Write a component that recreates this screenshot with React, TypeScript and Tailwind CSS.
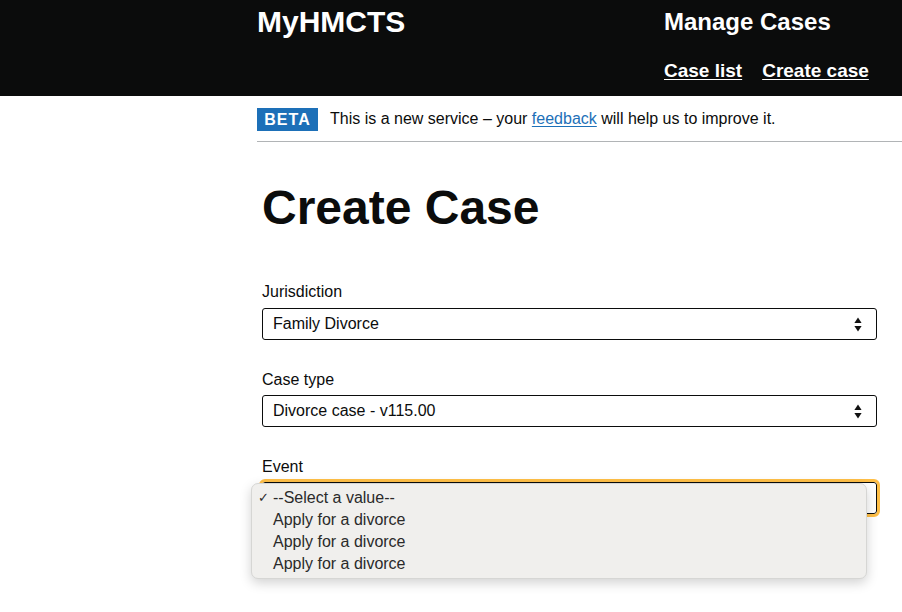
import React from "react";

const Arrows = () => (
  <svg width="8" height="15" viewBox="0 0 8 15" className="shrink-0">
    <path d="M4 0.5 L7.6 6 L0.4 6 Z" fill="#111" />
    <path d="M4 14.5 L7.6 9 L0.4 9 Z" fill="#111" />
  </svg>
);

const FakeSelect = ({ value, focused }: { value: string; focused?: boolean }) => (
  <div
    className={
      "flex h-[32px] w-[615px] items-center justify-between rounded-[3px] border border-[#0b0c0c] bg-white pl-[10px] pr-[14px] text-[16px] text-[#0b0c0c] " +
      (focused ? "outline outline-[3px] outline-[#ffbf47]" : "")
    }
  >
    <span>{value}</span>
    <Arrows />
  </div>
);

export default function App() {
  return (
    <div className="min-h-[612px] bg-white" style={{ fontFamily: '"Liberation Sans", Arial, sans-serif' }}>
      <header className="flex h-[96px] bg-[#0b0c0c] pl-[257px] text-white">
        <div className="w-[407px] pt-[5px] text-[30px] font-bold leading-[34px]">MyHMCTS</div>
        <div className="flex flex-col pt-[8px]">
          <div className="text-[24px] font-bold leading-[28px]">Manage Cases</div>
          <nav className="mt-[23px] flex gap-[20px] text-[19px] font-bold leading-[24px]">
            <a className="underline underline-offset-[2px]">Case list</a>
            <a className="underline underline-offset-[2px]">Create case</a>
          </nav>
        </div>
      </header>

      <div className="ml-[257px] flex items-center gap-[12px] border-b border-[#b1b4b6] pt-[11px] pb-[10px] text-[16px] text-[#0b0c0c]">
        <span className="flex h-[23px] w-[61px] items-center justify-center bg-[#1d70b8] pt-[1px] text-[16px] font-bold tracking-[1px] text-white">
          BETA
        </span>
        <span>
          This is a new service – your{" "}
          <a className="text-[#1d70b8] underline underline-offset-[2px]">feedback</a> will help us to improve it.
        </span>
      </div>

      <main className="pl-[262px] text-[#0b0c0c]">
        <h1 className="mt-[41px] text-[48px] font-bold leading-[50px]">Create Case</h1>

        <div className="mt-[49px] flex flex-col">
          <label className="mb-[6px] text-[16px] leading-[20px]">Jurisdiction</label>
          <FakeSelect value="Family Divorce" />

          <label className="mt-[30px] mb-[5px] text-[16px] leading-[20px]">Case type</label>
          <FakeSelect value="Divorce case - v115.00" />

          <label className="mt-[30px] mb-[5px] text-[16px] leading-[20px]">Event</label>
          <div className="relative">
            <FakeSelect value="--Select a value--" focused />
            <div className="absolute left-[-11px] top-[1px] h-[96px] w-[616px] rounded-[7px] border border-[#d6d6d4] bg-[#f0efed] pt-[3px] text-[16px] leading-[22px] text-[#2a2a2a] shadow-[0_4px_12px_rgba(0,0,0,0.18)]">
              <div className="flex items-center">
                <span className="w-[21px] pl-[6px] text-[13px]">✓</span>
                <span>--Select a value--</span>
              </div>
              <div className="pl-[21px]">Apply for a divorce</div>
              <div className="pl-[21px]">Apply for a divorce</div>
              <div className="pl-[21px]">Apply for a divorce</div>
            </div>
          </div>
        </div>
      </main>
    </div>
  );
}
